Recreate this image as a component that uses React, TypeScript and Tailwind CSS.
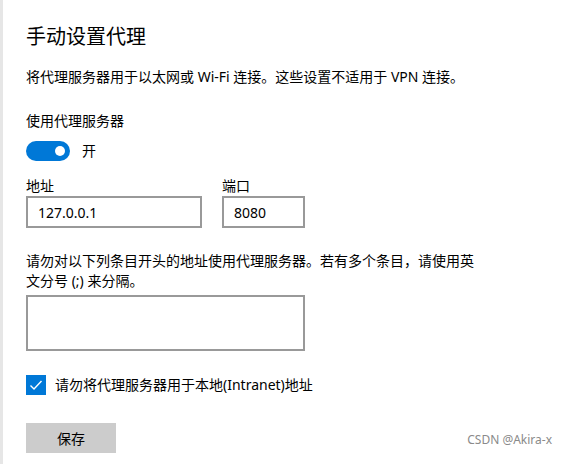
import React from "react";

export default function App() {
  const font = "font-['Noto_Sans','Noto_Sans_CJK_SC',sans-serif]";
  return (
    <div className={`relative flex w-[565px] h-[464px] bg-white text-black overflow-hidden ${font}`}>
      <div className="w-[3px] h-full bg-[#e6e6e6]" />
      <div className="flex flex-col pl-[23px]">
        <div className="mt-[23px] text-[20px] leading-[28px]">手动设置代理</div>
        <div className="mt-[16px] text-[14px] leading-[20px]">
          将代理服务器用于以太网或 Wi-Fi 连接。这些设置不适用于 VPN 连接。
        </div>
        <div className="mt-[24px] text-[14px] leading-[20px]">使用代理服务器</div>
        <div className="mt-[10px] flex items-center gap-[12px]">
          <div className="w-[44px] h-[20px] rounded-full bg-[#0078d7] flex items-center justify-end pr-[5px]">
            <div className="w-[10px] h-[10px] rounded-full bg-white" />
          </div>
          <span className="text-[14px] leading-[20px]">开</span>
        </div>
        <div className="mt-[15px] flex gap-[20px]">
          <div className="flex flex-col">
            <span className="text-[14px] leading-[20px]">地址</span>
            <div className="w-[176px] h-[32px] border-2 border-[#999999] flex items-center pl-[10px] text-[14px]">
              127.0.0.1
            </div>
          </div>
          <div className="flex flex-col">
            <span className="text-[14px] leading-[20px]">端口</span>
            <div className="w-[83px] h-[32px] border-2 border-[#999999] flex items-center pl-[10px] text-[14px]">
              8080
            </div>
          </div>
        </div>
        <div className="mt-[23px] w-[455px] text-[14px] leading-[20px]">
          请勿对以下列条目开头的地址使用代理服务器。若有多个条目，请使用英文分号 (;) 来分隔。
        </div>
        <div className="mt-[4px] w-[279px] h-[56px] border-2 border-[#999999]" />
        <div className="mt-[24px] flex items-center gap-[9px]">
          <div className="w-[20px] h-[20px] bg-[#0078d7] flex items-center justify-center">
            <svg width="14" height="14" viewBox="0 0 14 14" fill="none">
              <path d="M1.5 7.5 L5 11 L12.5 3" stroke="white" strokeWidth="1.4" />
            </svg>
          </div>
          <span className="text-[14px] leading-[20px]">请勿将代理服务器用于本地(Intranet)地址</span>
        </div>
        <div className="mt-[28px] w-[90px] h-[30px] bg-[#cccccc] flex items-center justify-center text-[14px]">
          保存
        </div>
      </div>
      <div className="absolute right-[13px] top-[432px] text-[12px] leading-[16px] text-[#8a8a8a]">
        CSDN @Akira-x
      </div>
    </div>
  );
}
